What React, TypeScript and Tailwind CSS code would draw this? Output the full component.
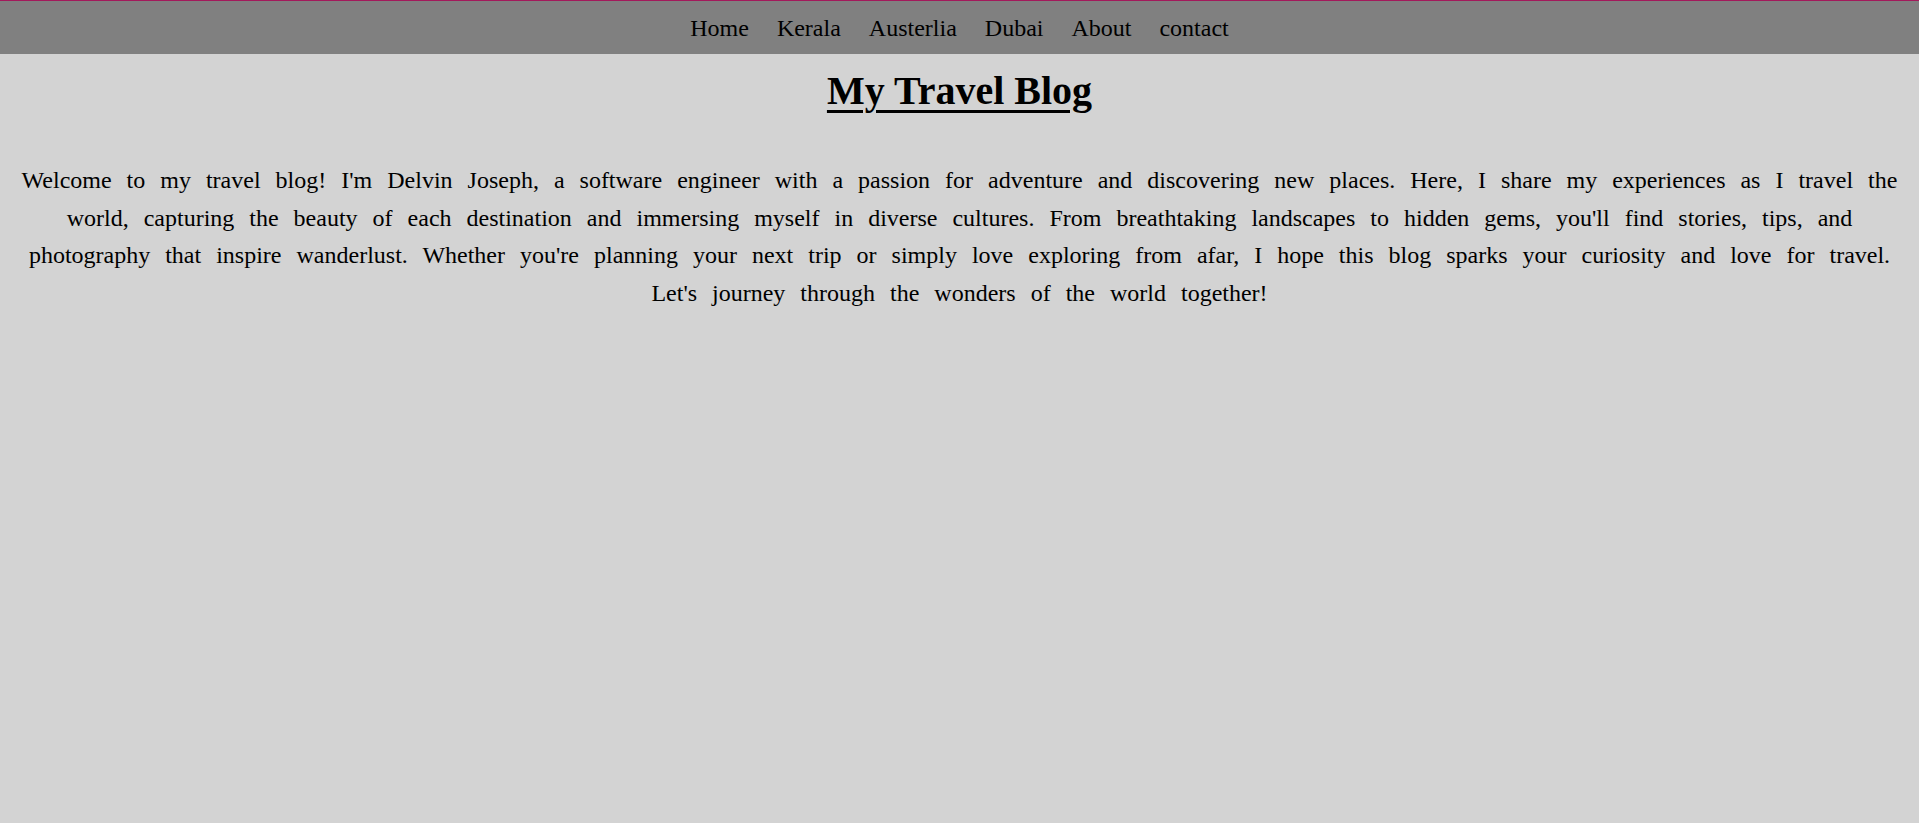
const links = ["Home", "Kerala", "Austerlia", "Dubai", "About", "contact"];

const intro =
  "Welcome to my travel blog! I'm Delvin Joseph, a software engineer with a passion for adventure and discovering new places. Here, I share my experiences as I travel the world, capturing the beauty of each destination and immersing myself in diverse cultures. From breathtaking landscapes to hidden gems, you'll find stories, tips, and photography that inspire wanderlust. Whether you're planning your next trip or simply love exploring from afar, I hope this blog sparks your curiosity and love for travel. Let's journey through the wonders of the world together!";

export default function App() {
  return (
    <div className="min-h-screen bg-[#d3d3d3] text-black [font-family:'Liberation_Serif','Times_New_Roman',serif]">
      <nav className="flex h-[54px] items-center justify-center gap-[28px] border-t border-[#a3195b] bg-[#808080] text-[24px]">
        {links.map((link) => (
          <a key={link} href="#" className="text-black">
            {link}
          </a>
        ))}
      </nav>

      <h1 className="mt-[13px] text-center text-[40px] font-bold leading-[48px] underline decoration-[3px] underline-offset-[6px]">
        My Travel Blog
      </h1>

      <p className="mt-[47px] px-[20px] text-center text-[24px] leading-[37.5px] [word-spacing:9px]">
        {intro}
      </p>
    </div>
  );
}
